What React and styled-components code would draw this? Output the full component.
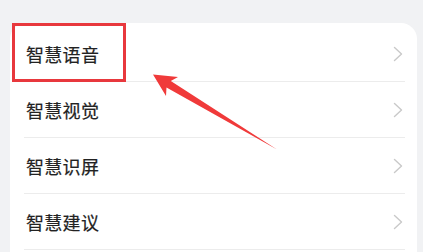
import React from "react";
import styled, { createGlobalStyle } from "styled-components";

const Global = createGlobalStyle`
  html, body { margin: 0; padding: 0; background: #f1f2f4; overflow: hidden; }
  body { font-family: "Noto Sans CJK SC", "Noto Sans", sans-serif; }
`;

const Page = styled.div`
  position: relative;
  width: 423px;
  height: 252px;
  padding: 23px 6px 0 10px;
  box-sizing: border-box;
  overflow: hidden;
  display: flex;
  flex-direction: column;
`;

const Card = styled.div`
  background: #ffffff;
  border-radius: 16px 16px 0 0;
  padding-top: 3px;
  display: flex;
  flex-direction: column;
  flex: 1;
  box-sizing: border-box;
`;

const Row = styled.div`
  height: 56px;
  flex-shrink: 0;
  margin: 0 12px 0 14px;
  display: flex;
  align-items: center;
  justify-content: space-between;
  border-bottom: 1px solid #ececec;
  box-sizing: border-box;
`;

const Label = styled.span`
  font-size: 18px;
  font-weight: 400;
  color: #222222;
  padding-left: 2px;
  letter-spacing: 0.3px;
  line-height: 1;
  -webkit-text-stroke: 0.2px #222222;
`;

const Chevron = styled.svg`
  width: 10px;
  height: 16px;
  margin-right: 2px;
`;

const Highlight = styled.div`
  position: absolute;
  left: 12px;
  top: 23px;
  width: 114px;
  height: 59px;
  border: 3px solid #e8383d;
  box-sizing: border-box;
`;

const Arrow = styled.svg`
  position: absolute;
  left: 0;
  top: 0;
  width: 423px;
  height: 252px;
  pointer-events: none;
`;

const items = ["智慧语音", "智慧视觉", "智慧识屏", "智慧建议"];

export default function App() {
  return (
    <>
      <Global />
      <Page>
        <Card>
          {items.map((t) => (
            <Row key={t}>
              <Label>{t}</Label>
              <Chevron viewBox="0 0 10 16">
                <path d="M1.5 1.5 L8.5 8 L1.5 14.5" fill="none" stroke="#c9c9c9" strokeWidth="1.4" strokeLinecap="round" strokeLinejoin="round" />
              </Chevron>
            </Row>
          ))}
        </Card>
        <Highlight />
        <Arrow viewBox="0 0 423 252">
          <polygon
            points="153,74.5 178,77 170.8,81 277,149.5 166.5,87.5 166,96"
            fill="#f03a3a"
          />
        </Arrow>
      </Page>
    </>
  );
}
